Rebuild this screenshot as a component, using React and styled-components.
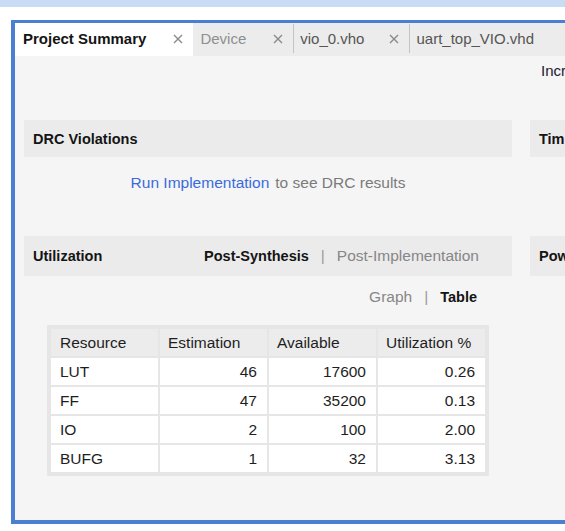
import React from 'react';
import styled, { createGlobalStyle } from 'styled-components';

const GlobalStyle = createGlobalStyle`
    html, body {
        margin: 0;
        background: #ffffff;
        overflow: hidden;
    }
    body {
        font-family: "Liberation Sans", Arial, sans-serif;
        color: #1e1e1e;
    }
`;

const TopBand = styled.div`
    height: 7px;
    background: #c9dcf6;
`;

const Frame = styled.div`
    box-sizing: border-box;
    margin: 13px 0 0 11px;
    width: 720px;
    height: 504px;
    border: 3px solid #4b7fd2;
    border-left-width: 4px;
    border-bottom-width: 4px;
    display: flex;
    flex-direction: column;
    background: #f5f5f5;
`;

const TabBar = styled.div`
    display: flex;
    height: 33px;
    background: #ececec;
    flex-shrink: 0;
`;

const Tab = styled.div`
    display: flex;
    align-items: center;
    padding: 0 8px 2px ${(p) => (p.$active ? 8 : 7)}px;
    background: ${(p) => (p.$active ? '#ffffff' : 'transparent')};
    font-size: 15px;
    font-weight: ${(p) => (p.$active ? 700 : 400)};
    color: ${(p) => (p.$active ? '#141414' : p.$dim ? '#8f8f8f' : '#555555')};
    position: relative;

    ${(p) =>
        p.$divider &&
        `&::before {
            content: '';
            position: absolute;
            left: 0;
            top: 1px;
            bottom: 3px;
            width: 1px;
            background: #c4c4c4;
        }`}
`;

const Close = styled.span`
    display: flex;
    margin-left: ${(p) => p.$gap}px;
    margin-right: 1px;
`;

const Content = styled.div`
    flex: 1;
    display: grid;
    grid-template-columns: 488px 1fr;
    grid-template-rows: 64px 116px auto;
    column-gap: 18px;
    padding-left: 9px;
`;

const TopNote = styled.div`
    padding: 6px 0 0 11px;
    font-size: 15px;
    line-height: 18px;
    color: #1d1830;
    white-space: nowrap;
`;

const Section = styled.div`
    display: flex;
    flex-direction: column;
`;

const SectionHeader = styled.div`
    display: flex;
    align-items: center;
    justify-content: space-between;
    height: ${(p) => p.$h}px;
    padding: 0 33px 0 9px;
    background: #ebebeb;
    font-size: 14.5px;
    font-weight: 700;
    color: #141414;
    white-space: nowrap;
`;

const ViewSwitch = styled.div`
    display: flex;
    align-items: center;
    gap: 12px;
    font-size: 15.5px;
    line-height: 18px;
    ${(p) => p.$right && `justify-content: flex-end; padding-right: ${p.$right}px;`}
`;

const SwitchItem = styled.span`
    font-weight: ${(p) => (p.$on ? 700 : 400)};
    font-size: ${(p) => (p.$on ? '14.5px' : 'inherit')};
    color: ${(p) => (p.$on ? '#141414' : '#868686')};
`;

const Bar = styled.span`
    color: #9a9a9a;
    font-weight: 400;
`;

const Message = styled.div`
    padding-top: 17px;
    text-align: center;
    font-size: 15.5px;
    line-height: 18px;
    color: #7b7b7b;
`;

const Link = styled.span`
    color: #3a6bdc;
    margin-right: 6px;
`;

const Body = styled.div`
    padding-top: 12px;
`;

const TableWrap = styled.div`
    margin: 19px 23px 0;
    padding: 2px;
    background: #e6e6e6;
`;

const Table = styled.table`
    width: 100%;
    table-layout: fixed;
    border-collapse: separate;
    border-spacing: 2px;
    font-size: 15.5px;
    color: #1e1e1e;
`;

const Th = styled.th`
    height: 27px;
    padding: 0 8px 0 ${(p) => (p.$first ? 9 : 8)}px;
    background: #ececec;
    font-weight: 400;
    text-align: left;
    white-space: nowrap;
`;

const Td = styled.td`
    height: 27px;
    padding: 0 10px 0 9px;
    background: #ffffff;
    text-align: ${(p) => (p.$num ? 'right' : 'left')};
`;

const CloseIcon = () => (
    <svg width="12" height="12" viewBox="0 0 12 12">
        <path d="M2 2 L10 10 M10 2 L2 10" stroke="#8a8a8a" strokeWidth="1.4" />
    </svg>
);

const tabs = [
    { label: 'Project Summary', active: true, gap: 26 },
    { label: 'Device', dim: true, gap: 26 },
    { label: 'vio_0.vho', divider: true, gap: 24 },
    { label: 'uart_top_VIO.vhd', divider: true },
];

const rows = [
    ['LUT', '46', '17600', '0.26'],
    ['FF', '47', '35200', '0.13'],
    ['IO', '2', '100', '2.00'],
    ['BUFG', '1', '32', '3.13'],
];

function App() {
    return (
        <>
            <GlobalStyle />
            <TopBand />
            <Frame>
                <TabBar>
                    {tabs.map((t) => (
                        <Tab key={t.label} $active={t.active} $dim={t.dim} $divider={t.divider}>
                            {t.label}
                            {t.gap && (
                                <Close $gap={t.gap}>
                                    <CloseIcon />
                                </Close>
                            )}
                        </Tab>
                    ))}
                </TabBar>
                <Content>
                    <div />
                    <TopNote>Incremental compile</TopNote>

                    <Section>
                        <SectionHeader $h={37}>DRC Violations</SectionHeader>
                        <Message>
                            <Link>Run Implementation</Link>to see DRC results
                        </Message>
                    </Section>
                    <Section>
                        <SectionHeader $h={37}>Timing</SectionHeader>
                    </Section>

                    <Section>
                        <SectionHeader $h={40}>
                            Utilization
                            <ViewSwitch>
                                <SwitchItem $on>Post-Synthesis</SwitchItem>
                                <Bar>|</Bar>
                                <SwitchItem>Post-Implementation</SwitchItem>
                            </ViewSwitch>
                        </SectionHeader>
                        <Body>
                            <ViewSwitch $right={35}>
                                <SwitchItem>Graph</SwitchItem>
                                <Bar>|</Bar>
                                <SwitchItem $on>Table</SwitchItem>
                            </ViewSwitch>
                            <TableWrap>
                                <Table>
                                    <thead>
                                        <tr>
                                            <Th $first>Resource</Th>
                                            <Th>Estimation</Th>
                                            <Th>Available</Th>
                                            <Th>Utilization %</Th>
                                        </tr>
                                    </thead>
                                    <tbody>
                                        {rows.map((r) => (
                                            <tr key={r[0]}>
                                                <Td>{r[0]}</Td>
                                                <Td $num>{r[1]}</Td>
                                                <Td $num>{r[2]}</Td>
                                                <Td $num>{r[3]}</Td>
                                            </tr>
                                        ))}
                                    </tbody>
                                </Table>
                            </TableWrap>
                        </Body>
                    </Section>
                    <Section>
                        <SectionHeader $h={40}>Power</SectionHeader>
                    </Section>
                </Content>
            </Frame>
        </>
    );
}

export default App;
